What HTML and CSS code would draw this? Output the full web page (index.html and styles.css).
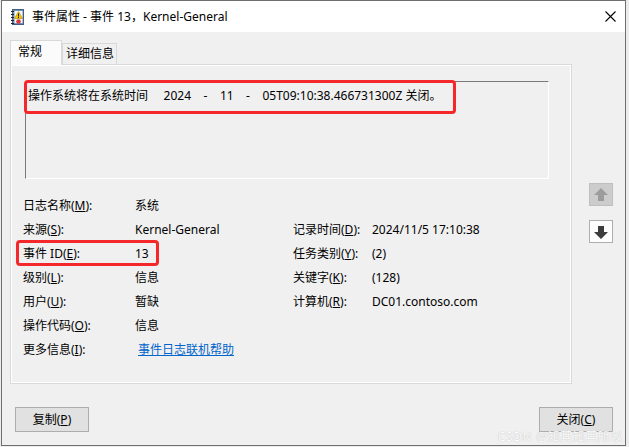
FILE: index.html
```html
<!DOCTYPE html>
<html lang="zh-CN">
<head>
<meta charset="utf-8">
<title>事件属性</title>
<link rel="stylesheet" href="styles.css">
</head>
<body>
<div class="window">
  <div class="titlebar">
    <svg class="title-icon" width="13" height="16" viewBox="0 0 13 16">
      <rect x="1.5" y="0.5" width="11" height="15" fill="#6f8fb5" stroke="#3f5f85"/>
      <rect x="3.5" y="2" width="8" height="12" fill="#f4f6f9"/>
      <g fill="#222"><rect x="0" y="2" width="3" height="1"/><rect x="0" y="5" width="3" height="1"/><rect x="0" y="8" width="3" height="1"/><rect x="0" y="11" width="3" height="1"/><rect x="0" y="14" width="3" height="1"/></g>
      <polygon points="7.5,2.5 11.5,9.5 3.5,9.5" fill="#f5c400" stroke="#b08a00" stroke-width="0.6"/>
      <rect x="7" y="4.5" width="1" height="3" fill="#222"/>
      <rect x="7" y="8" width="1" height="1" fill="#222"/>
      <circle cx="7.5" cy="12.5" r="2.3" fill="#d83b3b"/>
    </svg>
    <span class="title">事件属性 - 事件 13，Kernel-General</span>
    <svg class="close" width="11" height="11" viewBox="0 0 11 11"><path d="M0.5 0.5 L10.5 10.5 M10.5 0.5 L0.5 10.5" stroke="#000" stroke-width="1.1" fill="none"/></svg>
  </div>
  <div class="client">
    <div class="main">
      <div class="tabwrap">
        <div class="tabs">
          <div class="tab active">常规</div>
          <div class="tab">详细信息</div>
        </div>
        <div class="panel">
          <div class="desc">
            <div class="desc-text">操作系统将在系统时间     2024    -    11    -    05T09:10:38.466731300Z 关闭。</div>
            <span class="mark mark-desc"></span>
          </div>
          <div class="fields">
            <span class="lbl">日志名称(<u>M</u>):</span><span class="val">系统</span><span></span><span></span>
            <span class="lbl">来源(<u>S</u>):</span><span class="val">Kernel-General</span><span class="lbl">记录时间(<u>D</u>):</span><span class="val">2024/11/5 17:10:38</span>
            <span class="lbl">事件 ID(<u>E</u>):</span><span class="val">13</span><span class="lbl">任务类别(<u>Y</u>):</span><span class="val">(2)</span>
            <span class="lbl">级别(<u>L</u>):</span><span class="val">信息</span><span class="lbl">关键字(<u>K</u>):</span><span class="val">(128)</span>
            <span class="lbl">用户(<u>U</u>):</span><span class="val">暂缺</span><span class="lbl">计算机(<u>R</u>):</span><span class="val">DC01.contoso.com</span>
            <span class="lbl">操作代码(<u>O</u>):</span><span class="val">信息</span><span></span><span></span>
            <span class="lbl">更多信息(<u>I</u>):</span><span class="val"><a class="link" href="#">事件日志联机帮助</a></span><span></span><span></span>
            <span class="mark mark-id"></span>
          </div>
        </div>
      </div>
      <div class="arrows">
        <div class="arrow-btn disabled">
          <svg width="16" height="16" viewBox="0 0 16 16"><polygon points="8,1 15,8 11,8 11,14 5,14 5,8 1,8" fill="#9c9c9c"/></svg>
        </div>
        <div class="arrow-btn">
          <svg width="16" height="16" viewBox="0 0 16 16"><polygon points="8,15 15,8 11,8 11,2 5,2 5,8 1,8" fill="#3c3c3c"/></svg>
        </div>
      </div>
    </div>
    <div class="buttons">
      <div class="btn">复制(<u>P</u>)</div>
      <div class="btn">关闭(<u>C</u>)</div>
    </div>
  </div>
  <div class="watermark">CSDN @知其知其所以</div>
</div>
</body>
</html>
```

FILE: styles.css
```css
* { box-sizing: border-box; }
body {
  margin: 0;
  background: #ececec;
  font-family: "Noto Sans", "Noto Sans CJK SC", sans-serif;
  font-size: 12px;
  color: #000;
}
.window {
  margin-left: 1px;
  width: 625px;
  height: 446px;
  border: 1px solid #6f6f6f;
  background: #f0f0f0;
  position: relative;
  overflow: hidden;
}
.titlebar {
  height: 31px;
  background: #fff;
  display: flex;
  align-items: center;
  padding-left: 9px;
}
.title-icon { margin-right: 8px; margin-top: 1px; }
.title { line-height: 16px; }
.close { margin-left: auto; margin-right: 9px; }
.client {
  height: 413px;
  display: flex;
  flex-direction: column;
}
.main {
  display: flex;
  padding: 8px 0 0 8px;
}
.tabwrap { width: 562px; }
.tabs {
  display: flex;
  align-items: flex-end;
  height: 24px;
  position: relative;
  z-index: 1;
}
.tab {
  height: 21px;
  width: 55px;
  border: 1px solid #d9d9d9;
  border-bottom: none;
  padding-left: 3px;
  line-height: 20px;
  background: #f0f0f0;
}
.tab.active {
  height: 25px;
  width: 52px;
  margin-bottom: -1px;
  padding-left: 7px;
  line-height: 21px;
  background: #fbfbfb;
  position: relative;
  z-index: 2;
}
.panel {
  height: 320px;
  border: 1px solid #d9d9d9;
  box-shadow: inset 0 0 0 1px #fff;
  background: #f0f0f0;
  padding-top: 16px;
}
.desc {
  position: relative;
  margin-left: 14px;
  width: 524px;
  height: 98px;
  border: 1px solid;
  border-color: #7a7a7a #ffffff #ffffff #7a7a7a;
}
.desc-text {
  white-space: pre;
  line-height: 16px;
  padding: 6px 0 0 2px;
}
.mark {
  position: absolute;
  border: 3px solid #f4282a;
  border-radius: 4px;
}
.mark-desc {
  left: -2px;
  top: -2px;
  width: 432px;
  height: 34px;
}
.fields {
  position: relative;
  margin: 15px 0 0 12px;
  display: grid;
  grid-template-columns: 112px 158px 79px 1fr;
  grid-auto-rows: 24px;
  align-items: center;
  line-height: 16px;
}
.mark-id {
  left: -7px;
  top: 46px;
  width: 143px;
  height: 26px;
}
.link {
  color: #0066cc;
  text-decoration: underline;
  margin-left: 3px;
}
.arrows {
  margin-left: 17px;
  padding-top: 143px;
  display: flex;
  flex-direction: column;
  gap: 14px;
}
.arrow-btn {
  width: 24px;
  height: 23px;
  border: 1px solid #adadad;
  background: #fdfdfd;
  display: flex;
  align-items: center;
  justify-content: center;
}
.arrow-btn.disabled {
  background: #cccccc;
  border-color: #bfbfbf;
}
.buttons {
  display: flex;
  justify-content: space-between;
  padding: 0 12px 0 13px;
  margin-top: 23px;
}
.btn {
  width: 74px;
  height: 25px;
  border: 1px solid #adadad;
  background: #e1e1e1;
  display: flex;
  align-items: center;
  justify-content: center;
  line-height: 16px;
}
.watermark {
  position: absolute;
  right: 2px;
  bottom: 1px;
  font-size: 12px;
  line-height: 14px;
  color: #fdfdfd;
  text-shadow: 0 0 1px #a8a8a8;
  letter-spacing: 0.6px;
}
```
